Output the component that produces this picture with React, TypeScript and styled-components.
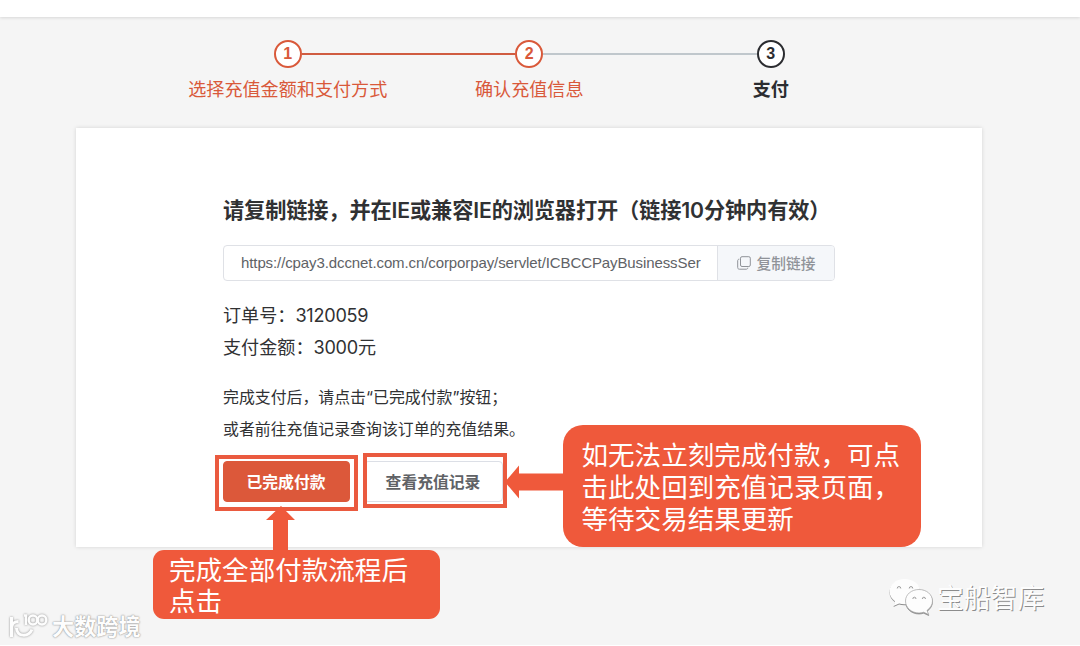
import styled, { createGlobalStyle, css } from 'styled-components'

const GlobalStyle = createGlobalStyle`
  * {
    box-sizing: border-box;
  }

  body {
    margin: 0;
    background-color: #ffffff;
    font-family: 'Inter', 'Noto Sans CJK SC', sans-serif;
    color: #303133;
  }
`

const Page = styled.div`
  position: relative;
  height: 646px;
  overflow: hidden;
  display: flex;
  flex-direction: column;
`

const TopBar = styled.header`
  height: 17px;
  flex: none;
  background-color: #ffffff;
  box-shadow: 0 1px 3px rgba(0, 0, 0, 0.12);
  z-index: 1;
`

const Main = styled.main`
  height: 628px;
  padding: 23px 98px 0 76px;
  background-color: #f5f5f5;
`

const Steps = styled.ol`
  list-style: none;
  margin: 0 0 0 91px;
  padding: 0;
  display: grid;
  grid-template-columns: repeat(3, 241.5px);
`

const StepItem = styled.li<{ $active?: boolean }>`
  display: flex;
  flex-direction: column;
  align-items: center;
  color: ${({ $active }) => ($active ? '#2b2c30' : '#d9593a')};
  font-weight: ${({ $active }) => ($active ? 700 : 400)};
`

const StepHead = styled.div`
  width: 100%;
  display: grid;
  grid-template-columns: 1fr 28px 1fr;
  align-items: center;
`

const StepLine = styled.span<{ $color?: string }>`
  height: 2px;
  background-color: ${({ $color }) => $color ?? 'transparent'};
`

const StepCircle = styled.span`
  width: 28px;
  height: 28px;
  border: 2px solid currentColor;
  border-radius: 50%;
  background-color: #ffffff;
  display: flex;
  align-items: center;
  justify-content: center;
  font-family: 'Liberation Sans', sans-serif;
  font-size: 16px;
  font-weight: 700;
`

const StepLabel = styled.span`
  margin-top: 7px;
  font-size: 18.1px;
  line-height: 28px;
  white-space: nowrap;
`

const Card = styled.section`
  height: 419px;
  margin-top: 25px;
  padding: 67px 147px 0;
  background-color: #ffffff;
  box-shadow: 0 0 4px rgba(0, 0, 0, 0.14);
`

const Title = styled.h1`
  margin: 0 0 20px;
  font-size: 21.2px;
  font-weight: 600;
  line-height: 30px;
  letter-spacing: -0.12px;
  white-space: nowrap;
`

const LinkGroup = styled.div`
  width: 612px;
  height: 36px;
  display: flex;
  border: 1px solid #dfe1e6;
  border-radius: 4px;
  overflow: hidden;
`

const LinkInput = styled.div`
  width: 494px;
  padding-left: 17px;
  border-right: 1px solid #dfe1e6;
  font-family: 'Liberation Sans', sans-serif;
  font-size: 15px;
  line-height: 34px;
  letter-spacing: -0.1px;
  color: #606266;
  white-space: nowrap;
`

const CopyButton = styled.button`
  flex: 1;
  display: flex;
  align-items: center;
  justify-content: center;
  gap: 6px;
  padding: 0;
  border: 0;
  background-color: #f5f7fa;
  color: #909399;
  font-family: inherit;
  font-size: 14.7px;
  font-weight: 500;
`

const CopyLabel = styled.span`
  padding-bottom: 2px;
`

const OrderInfo = styled.div`
  margin-top: 18px;
  font-size: 18.1px;
  line-height: 32px;
`

const Value = styled.span`
  letter-spacing: -0.25px;
`

const Note = styled.div`
  margin-top: 19px;
  font-size: 15.9px;
  line-height: 32px;
`

const Actions = styled.div`
  margin-top: 15px;
  display: flex;
  gap: 14px;
`

const Button = styled.button<{ $primary?: boolean }>`
  width: ${({ $primary }) => ($primary ? 127 : 139)}px;
  height: 41px;
  padding: 0 1px 1px 0;
  border: 1px solid #dcdfe6;
  border-radius: 4px;
  background-color: #ffffff;
  color: #606266;
  font-family: inherit;
  font-size: 15.8px;
  font-weight: 600;

  ${({ $primary }) =>
    $primary &&
    css`
      border-color: #dc583a;
      background-color: #dc583a;
      color: #ffffff;
    `}
`

// Annotations drawn over the page
const Highlight = styled.div<{ $x: number; $y: number; $w: number; $h: number }>`
  position: absolute;
  left: ${({ $x }) => $x}px;
  top: ${({ $y }) => $y}px;
  width: ${({ $w }) => $w}px;
  height: ${({ $h }) => $h}px;
  border: 4px solid #ea5a3f;
`

const Callout = styled.div<{ $wide?: boolean }>`
  position: absolute;
  left: ${({ $wide }) => ($wide ? 563 : 153)}px;
  top: ${({ $wide }) => ($wide ? 425 : 550)}px;
  width: ${({ $wide }) => ($wide ? 357.5 : 287)}px;
  height: ${({ $wide }) => ($wide ? 121.5 : 68.5)}px;
  padding: ${({ $wide }) => ($wide ? '13px 0 0 18.5px' : '2.5px 0 0 16px')};
  border-radius: ${({ $wide }) => ($wide ? 20 : 11)}px;
  background-color: #ef593b;
  color: #ffffff;
  font-family: 'Noto Sans CJK SC', sans-serif;
  font-size: 26.55px;
  line-height: 31.8px;
  white-space: nowrap;
`

const Arrows = styled.svg`
  position: absolute;
  left: 0;
  top: 0;
  fill: #ef593b;
`

const Watermark = styled.div<{ $brand?: boolean }>`
  position: absolute;
  left: ${({ $brand }) => ($brand ? 889 : 8)}px;
  top: ${({ $brand }) => ($brand ? 575 : 608)}px;
  display: flex;
  align-items: center;
  gap: 4px;
  color: #fdfdfd;
  font-family: 'Noto Sans CJK SC', sans-serif;
  font-size: ${({ $brand }) => ($brand ? 26.8 : 22.2)}px;
  font-weight: ${({ $brand }) => ($brand ? 400 : 700)};
  line-height: ${({ $brand }) => ($brand ? 43 : 35)}px;
  white-space: nowrap;
  text-shadow: ${({ $brand }) => ($brand ? '1px 1px 0.5px #8c8c8c' : '0 0 2px #8f8f8f, 0 0 1px #a5a5a5')};

  svg {
    filter: ${({ $brand }) =>
      $brand ? 'drop-shadow(0.5px 1px 0.5px #8c8c8c)' : 'drop-shadow(0 0 1px #8f8f8f)'};
  }
`

const RED = '#d05c41'
const GREY = '#c0c7cc'

const steps = [
  { label: '选择充值金额和支付方式', right: RED },
  { label: '确认充值信息', left: RED, right: GREY },
  { label: '支付', left: GREY, active: true },
]

function CopyIcon() {
  return (
    <svg width="14" height="14" viewBox="0 0 14 14" fill="none" stroke="currentColor">
      <rect x="3.5" y="0.7" width="9.8" height="9.8" rx="1.5" />
      <path d="M2.3 3.2C1.2 3.2.7 3.8.7 4.8v6.7c0 1.1.6 1.7 1.7 1.7h6.8c1 0 1.6-.5 1.6-1.5" />
    </svg>
  )
}

function WechatLogo() {
  return (
    <svg width="44" height="40" viewBox="0 0 44 40">
      <path
        fill="#fdfdfd"
        d="M15.5 2C7 2 .5 7.500 .5 14.500c0 4.300 2.200 7.400 5.500 9.800L4.500 29l5.600-2.500c2 .600 3.800.900 6.100.800 8 0 15-5.500 15-12.800S24 2 15.500 2z"
      />
      <path
        fill="#fdfdfd"
        stroke="#a3a3a3"
        strokeWidth="0.7"
        d="M30 12.500c-7.600 0-13.500 5-13.500 11.500S22.400 36 30 36c1.500 0 3.200-.3 4.700-.8l5 2.400-1.700-4.200c3.300-2.400 5.500-5.700 5.500-9.400 0-6.500-6-11.500-13.500-11.500z"
      />
      <g fill="#f0f0f0" stroke="#999" strokeWidth="0.9">
        <path d="M8.200 11.500a1.800 2 0 1 1 3.600 0M20.200 11.500a1.800 2 0 1 1 3.600 0" />
        <path d="M23.800 22a1.600 1.800 0 1 1 3.200 0M33.300 22a1.600 1.800 0 1 1 3.200 0" />
      </g>
    </svg>
  )
}

function BrandLogo() {
  return (
    <svg width="40" height="32" viewBox="0 0 40 32" fill="none" stroke="#fdfdfd" strokeWidth="3">
      <path d="M2 8.500h1.500v18.500M4 16.500c0-3 2.500-5 6.500-5M8.500 18c0 9 12 9.500 15.500 1.500" />
      <path d="M16 5.500h2v9.500" strokeWidth="2.400" />
      <ellipse cx="25" cy="10" rx="4.300" ry="4.500" strokeWidth="2.400" />
      <ellipse cx="34" cy="10" rx="4.300" ry="4.500" strokeWidth="2.400" />
    </svg>
  )
}

export default function App() {
  return (
    <>
      <GlobalStyle />
      <Page>
        <TopBar />
        <Main>
          <Steps>
            {steps.map((step, i) => (
              <StepItem key={step.label} $active={step.active}>
                <StepHead>
                  <StepLine $color={step.left} />
                  <StepCircle>{i + 1}</StepCircle>
                  <StepLine $color={step.right} />
                </StepHead>
                <StepLabel>{step.label}</StepLabel>
              </StepItem>
            ))}
          </Steps>

          <Card>
            <Title>请复制链接，并在IE或兼容IE的浏览器打开（链接10分钟内有效）</Title>
            <LinkGroup>
              <LinkInput>https://cpay3.dccnet.com.cn/corporpay/servlet/ICBCCPayBusinessSer</LinkInput>
              <CopyButton type="button">
                <CopyIcon />
                <CopyLabel>复制链接</CopyLabel>
              </CopyButton>
            </LinkGroup>
            <OrderInfo>
              <div>订单号：<Value>3120059</Value></div>
              <div>支付金额：<Value>3000</Value>元</div>
            </OrderInfo>
            <Note>
              <div>完成支付后，请点击“已完成付款”按钮；</div>
              <div>或者前往充值记录查询该订单的充值结果。</div>
            </Note>
            <Actions>
              <Button type="button" $primary>已完成付款</Button>
              <Button type="button">查看充值记录</Button>
            </Actions>
          </Card>
        </Main>

        <Highlight $x={214.5} $y={455} $w={143.5} $h={56} />
        <Highlight $x={363} $y={453} $w={143.5} $h={54.5} />
        <Arrows width="1080" height="646">
          <path d="M281 506l14 14h-7v32h-15v-32h-7z" />
          <path d="M505 482l14-16.500v8h45v17h-45v8z" />
        </Arrows>
        <Callout>
          完成全部付款流程后
          <br />
          点击
        </Callout>
        <Callout $wide>
          如无法立刻完成付款，可点
          <br />
          击此处回到充值记录页面，
          <br />
          等待交易结果更新
        </Callout>
        <Watermark $brand>
          <WechatLogo />
          宝船智库
        </Watermark>
        <Watermark>
          <BrandLogo />
          大数跨境
        </Watermark>
      </Page>
    </>
  )
}
